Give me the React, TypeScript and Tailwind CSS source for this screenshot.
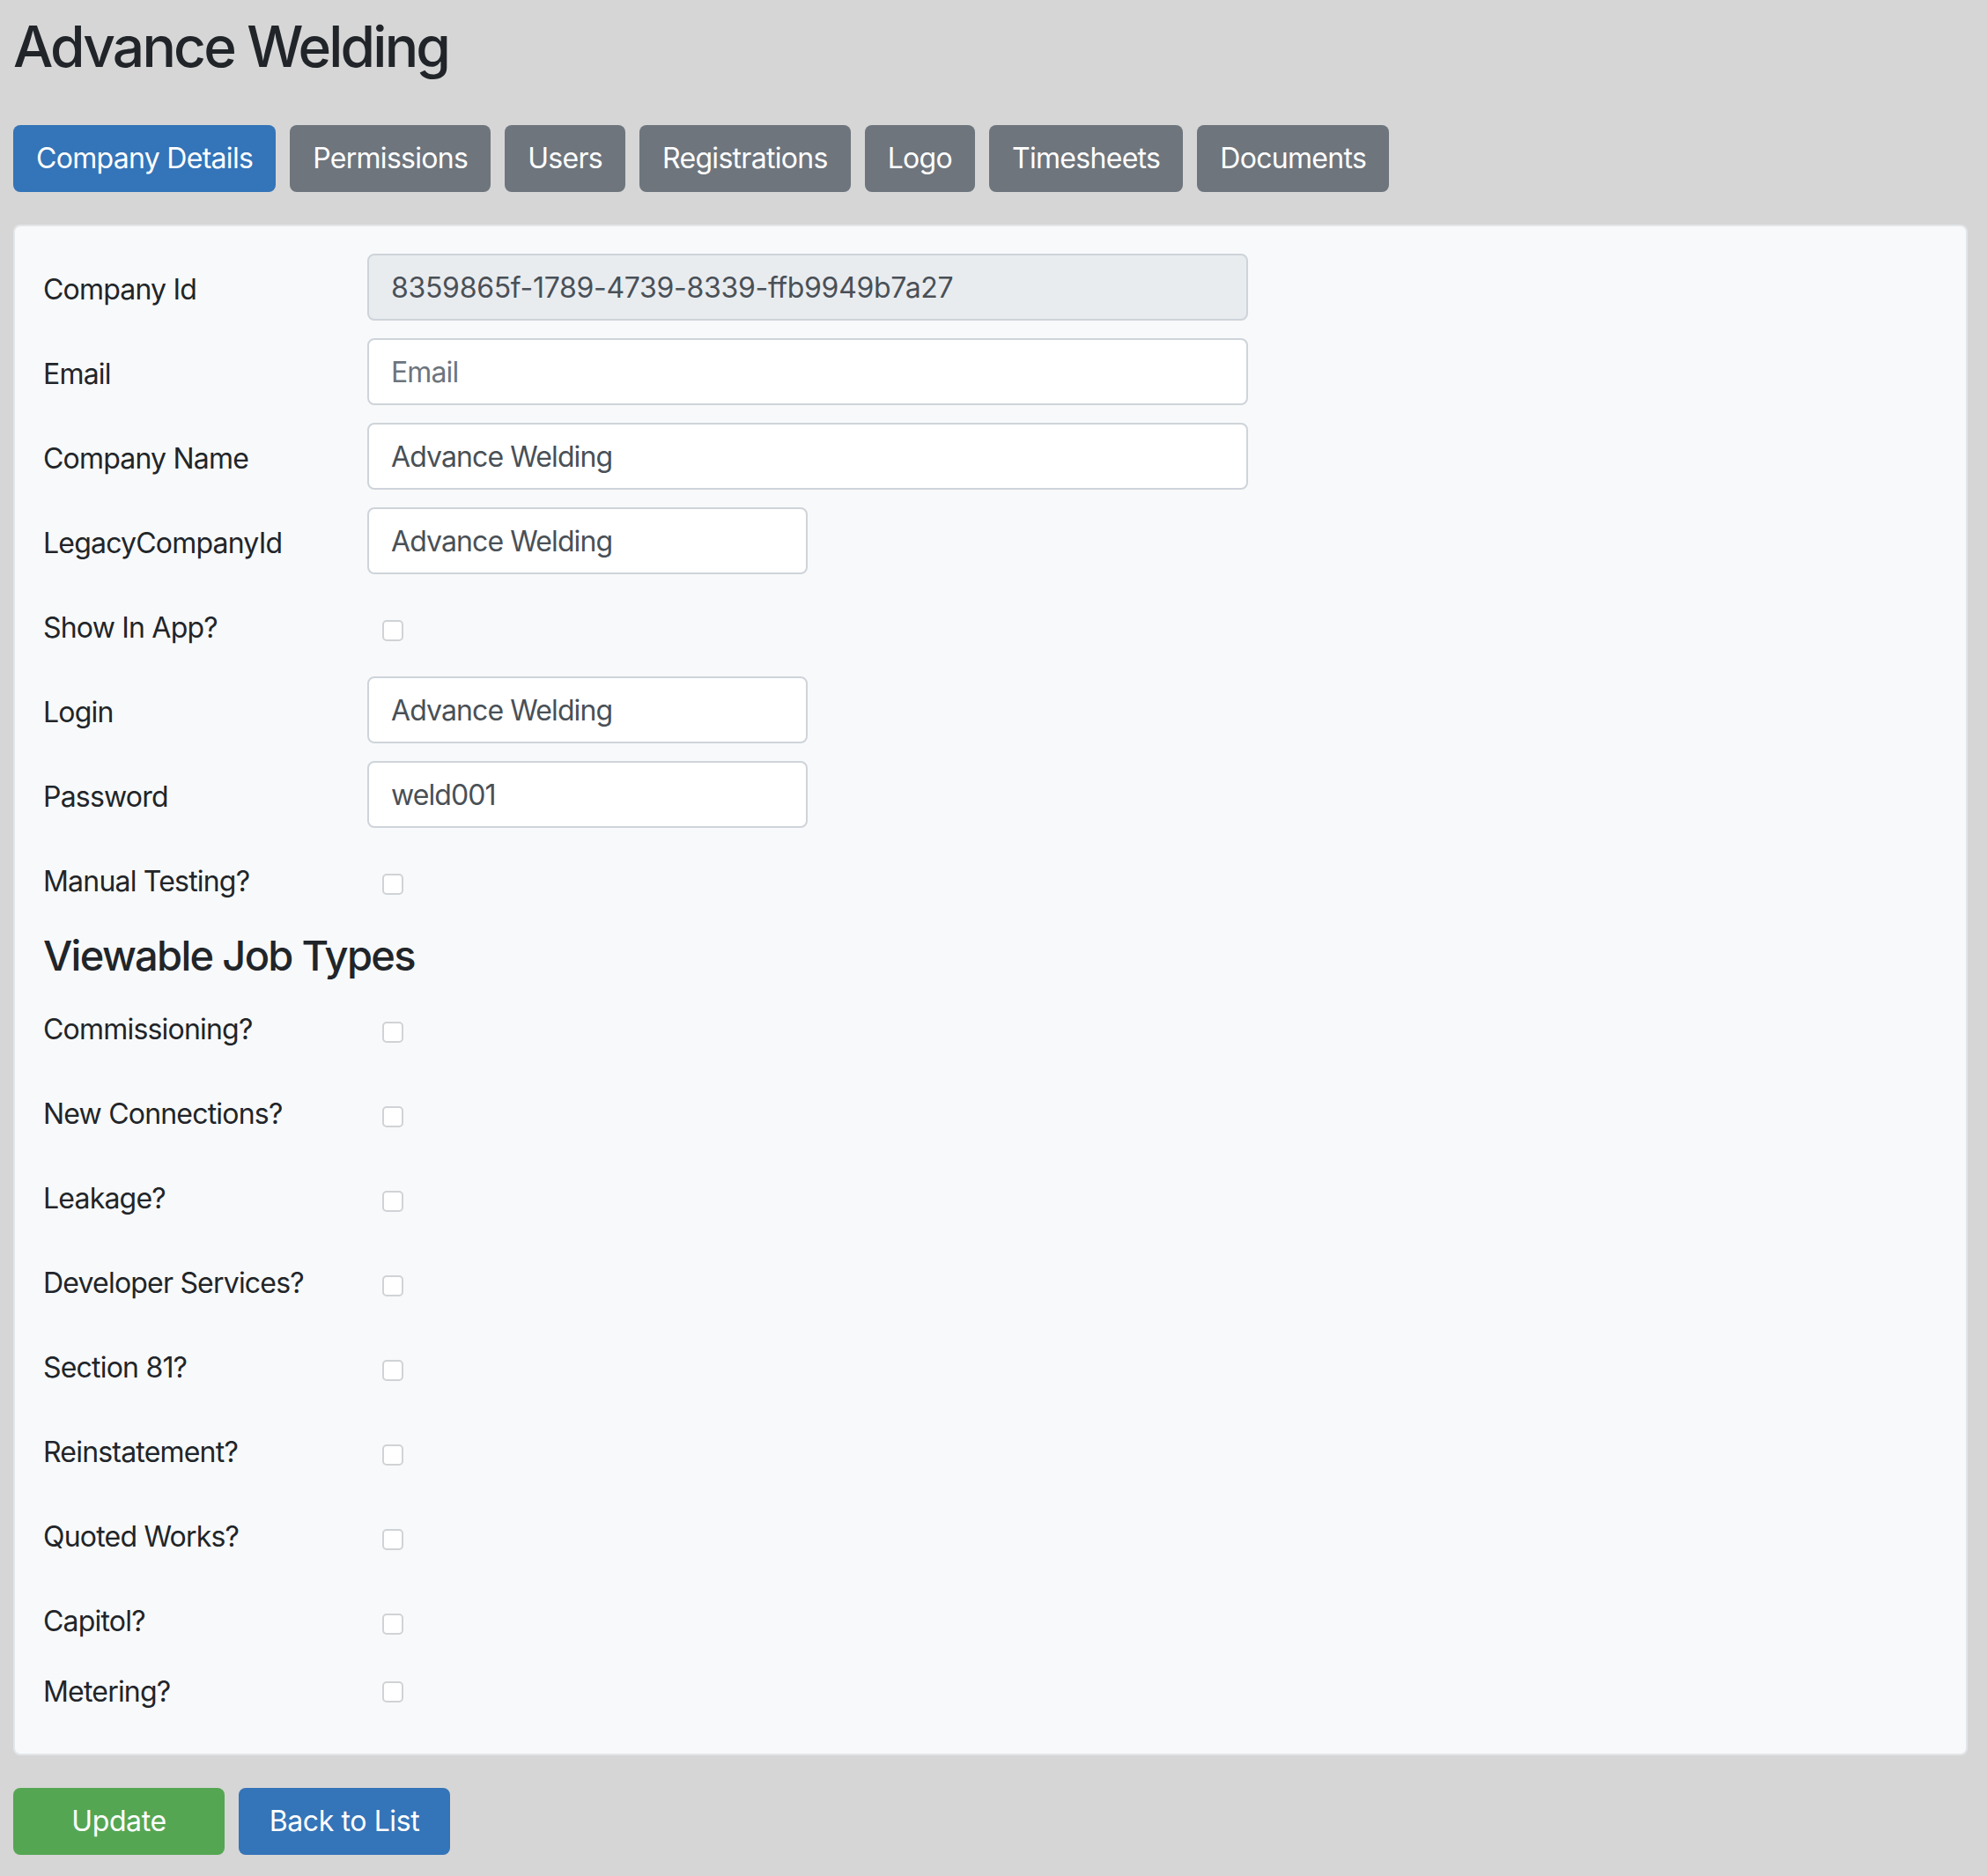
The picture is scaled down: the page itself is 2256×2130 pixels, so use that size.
import React from "react";

const tabs = ["Company Details", "Permissions", "Users", "Registrations", "Logo", "Timesheets", "Documents"];

const font = { fontFamily: "Inter, 'Noto Sans', 'Liberation Sans', sans-serif" };

function TextRow({ label, value, placeholder, wide, disabled, tight }: { label: string; value?: string; placeholder?: string; wide?: boolean; disabled?: boolean; tight?: boolean }) {
  return (
    <div className="flex items-center h-[76px] mb-[20px]">
      <label className="w-[368px] shrink-0 pt-[5px] text-[32px] leading-[48px] text-[#212529] tracking-[-0.8px]">{label}</label>
      <input
        readOnly
        value={value ?? ""}
        placeholder={placeholder}
        className={`${wide ? "w-[1000px]" : "w-[500px]"} h-[76px] border-2 border-[#ced4da] rounded-[8px] px-[25px] text-[32px] outline-none ${disabled ? "bg-[#e9ecef]" : "bg-white"} ${tight ? "tracking-[-0.3px]" : "tracking-[-0.9px]"} text-[#495057] placeholder:text-[#6c757d]`}
        style={font}
      />
    </div>
  );
}

function CheckRow({ label, last, tight }: { label: string; last?: boolean; tight?: boolean }) {
  return (
    <div className={`flex items-center h-[76px] ${last ? "mb-0" : tight ? "mb-[4px]" : "mb-[20px]"}`}>
      <label className="w-[368px] shrink-0 pt-[5px] text-[32px] leading-[48px] text-[#212529] tracking-[-0.8px]">{label}</label>
      <div className={`ml-[17px] w-[24px] h-[24px] rounded-[5px] border-2 border-[#d0d3d6] bg-white ${last ? "mt-[6px]" : "mt-[12px]"}`} />
    </div>
  );
}

export default function App() {
  return (
    <div className="min-h-[2130px] bg-[#d6d6d6] pl-[15px] pr-[22px] pt-[14px] pb-[22px]" style={font}>
      <h2 className="text-[64px] leading-[77px] font-medium text-[#212529] tracking-[-2.8px]">Advance Welding</h2>
      <div className="flex gap-[16px] mt-[51px]">
        {tabs.map((t, i) => (
          <div
            key={t}
            className={`h-[76px] px-[26px] flex items-center rounded-[8px] text-[32px] text-white tracking-[-0.7px] ${i === 0 ? "bg-[#3474b8]" : "bg-[#6e757d]"}`}
          >
            {t}
          </div>
        ))}
      </div>
      <div className="mt-[37px] bg-[#f8f9fa] border-2 border-[#e3e6e9] rounded-[8px] px-[32px] pt-[31px] pb-[35px]">
        <TextRow label="Company Id" value="8359865f-1789-4739-8339-ffb9949b7a27" wide disabled tight />
        <TextRow label="Email" placeholder="Email" wide />
        <TextRow label="Company Name" value="Advance Welding" wide />
        <TextRow label="LegacyCompanyId" value="Advance Welding" />
        <CheckRow label="Show In App?" />
        <TextRow label="Login" value="Advance Welding" />
        <TextRow label="Password" value="weld001" />
        <CheckRow label="Manual Testing?" />
        <h4 className="text-[47px] leading-[58px] font-medium text-[#212529] mb-[14px] tracking-[-1.7px]">Viewable Job Types</h4>
        <CheckRow label="Commissioning?" />
        <CheckRow label="New Connections?" />
        <CheckRow label="Leakage?" />
        <CheckRow label="Developer Services?" />
        <CheckRow label="Section 81?" />
        <CheckRow label="Reinstatement?" />
        <CheckRow label="Quoted Works?" />
        <CheckRow label="Capitol?" tight />
        <CheckRow label="Metering?" last />
      </div>
      <div className="flex gap-[16px] mt-[37px]">
        <button className="w-[240px] h-[76px] rounded-[8px] bg-[#55a653] text-white text-[32px] tracking-[-0.4px]" style={font}>Update</button>
        <button className="w-[240px] h-[76px] rounded-[8px] bg-[#3474b8] text-white text-[32px] tracking-[-0.4px]" style={font}>Back to List</button>
      </div>
    </div>
  );
}
